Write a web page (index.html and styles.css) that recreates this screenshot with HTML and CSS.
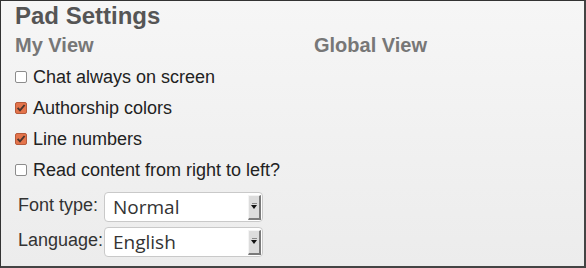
FILE: index.html
```html
<!DOCTYPE html>
<html>
<head>
<meta charset="utf-8">
<link rel="stylesheet" href="styles.css">
</head>
<body>
<div class="settings">
  <h1 class="title">Pad Settings</h1>
  <div class="columns">
    <div class="col">
      <h2 class="subtitle">My View</h2>
      <div class="option"><span class="box"></span><span class="label">Chat always on screen</span></div>
      <div class="option"><span class="box checked"><svg width="12" height="12" viewBox="0 0 12 12"><path d="M2.6 5.8 L5 8.4 L9.6 3" fill="none" stroke="#4a352d" stroke-width="1.9"/></svg></span><span class="label">Authorship colors</span></div>
      <div class="option"><span class="box checked"><svg width="12" height="12" viewBox="0 0 12 12"><path d="M2.6 5.8 L5 8.4 L9.6 3" fill="none" stroke="#4a352d" stroke-width="1.9"/></svg></span><span class="label">Line numbers</span></div>
      <div class="option"><span class="box"></span><span class="label">Read content from right to left?</span></div>
      <div class="fields">
        <div class="field">
          <span class="field-label">Font type:</span>
          <span class="select"><span class="select-text">Normal</span><span class="select-btn"></span></span>
        </div>
        <div class="field">
          <span class="field-label">Language:</span>
          <span class="select"><span class="select-text">English</span><span class="select-btn"></span></span>
        </div>
      </div>
    </div>
    <div class="col">
      <h2 class="subtitle">Global View</h2>
    </div>
  </div>
</div>
</body>
</html>
```
FILE: styles.css
```css
html, body {
  margin: 0;
  padding: 0;
}
body {
  width: 586px;
  height: 268px;
  overflow: hidden;
  background: #fff;
}
.settings {
  box-sizing: border-box;
  width: 586px;
  height: 268px;
  border: 1px solid #333;
  border-right: 2px solid #444;
  border-bottom: 2px solid #444;
  background: linear-gradient(#f6f6f6, #ececec);
  padding: 1px 14px 0 14px;
  font-family: "Liberation Sans", Arial, sans-serif;
}
.title {
  margin: 0;
  font-size: 24px;
  line-height: 28px;
  font-weight: bold;
  color: #555;
}
.columns {
  display: grid;
  grid-template-columns: 299px 1fr;
}
.subtitle {
  margin: 3px 0 5px 0;
  font-size: 20px;
  line-height: 24px;
  font-weight: bold;
  color: #777;
}
.option {
  display: flex;
  align-items: center;
  height: 31px;
  font-size: 18px;
  color: #222;
}
.box {
  box-sizing: border-box;
  width: 12px;
  height: 12px;
  border: 1px solid #8c8c8c;
  border-radius: 2px;
  background: #fff;
  margin-right: 6px;
  margin-top: -1px;
  position: relative;
}
.box.checked {
  background: #e4744b;
  border-color: #b75a3b;
}
.box svg {
  position: absolute;
  left: -1px;
  top: -1px;
}
.fields {
  margin-top: 6px;
  padding-left: 3px;
  display: flex;
  flex-direction: column;
  gap: 5px;
}
.field {
  display: flex;
  align-items: center;
}
.field-label {
  width: 86px;
  font-size: 18px;
  color: #333;
  margin-top: -3px;
}
.select {
  box-sizing: border-box;
  position: relative;
  width: 159px;
  height: 30px;
  border: 1px solid #c9c9c9;
  border-radius: 4px;
  background: #fff;
  display: flex;
  align-items: center;
  padding-left: 8px;
}
.select-text {
  font-family: "Open Sans", "DejaVu Sans", sans-serif;
  font-size: 19px;
  color: #333;
  line-height: 26px;
}
.select-btn {
  position: absolute;
  left: 143px;
  top: 2px;
  box-sizing: border-box;
  width: 13px;
  height: 25px;
  background: #dcdcdc;
  border-top: 1px solid #f4f4f4;
  border-left: 1px solid #f4f4f4;
  border-right: 2px solid #7a7a7a;
  border-bottom: 2px solid #7a7a7a;
}
.select-btn::after {
  content: "";
  position: absolute;
  left: 2px;
  top: 9px;
  width: 0;
  height: 0;
  border-left: 3.5px solid transparent;
  border-right: 3.5px solid transparent;
  border-top: 4px solid #111;
}
.select-btn::before {
  content: "";
  position: absolute;
  left: 3px;
  top: 7px;
  width: 5px;
  height: 1px;
  background: #888;
}
```
